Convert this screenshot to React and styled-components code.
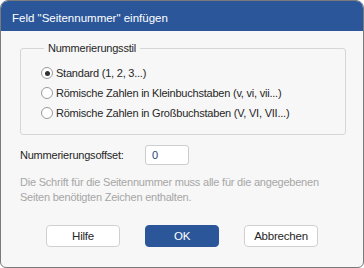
import React from 'react';
import styled, { createGlobalStyle } from 'styled-components';

const GlobalStyle = createGlobalStyle`
    html, body {
        margin: 0;
        padding: 0;
        background: #ffffff;
    }
    * {
        box-sizing: border-box;
    }
`;

const Window = styled.div`
    width: 364px;
    height: 268px;
    display: flex;
    flex-direction: column;
    border: 1px solid #7a7a7a;
    border-radius: 8px 8px 6px 6px;
    background: #f7f7f7;
    overflow: hidden;
    font-family: "Liberation Sans", Arial, sans-serif;
    color: #262626;
`;

const TitleBar = styled.div`
    height: 30px;
    flex: none;
    display: flex;
    align-items: center;
    padding: 3px 0 0 11px;
    background: #2b579a;
    color: #ffffff;
    font-size: 11.5px;
`;

const Body = styled.div`
    flex: 1;
    display: flex;
    flex-direction: column;
    padding: 10px 17px 0 19px;
    font-size: 11px;
    letter-spacing: -0.22px;
`;

const Group = styled.fieldset`
    margin: 0;
    padding: 8px 0 11px 20px;
    border: 1px solid #d6d6d6;
    border-radius: 3px;
    display: flex;
    flex-direction: column;
`;

const Legend = styled.legend`
    margin-left: 3px;
    padding: 0 4px;
    line-height: 14px;
`;

const RadioRow = styled.label`
    height: 20px;
    display: flex;
    align-items: center;
    gap: 3px;
`;

const RadioDot = styled.span`
    width: 12px;
    height: 12px;
    border-radius: 50%;
    border: 1px solid #9a9a9a;
    background: #ffffff;
    display: flex;
    align-items: center;
    justify-content: center;
    &::after {
        content: '';
        width: 5px;
        height: 5px;
        border-radius: 50%;
        background: ${p => (p.$checked ? '#333333' : 'transparent')};
    }
`;

const OffsetRow = styled.div`
    margin-top: 10px;
    height: 20px;
    display: flex;
    align-items: center;
`;

const OffsetLabel = styled.span`
    width: 125px;
`;

const OffsetInput = styled.div`
    width: 44px;
    height: 20px;
    display: flex;
    align-items: center;
    padding-left: 6px;
    border: 1px solid #cdcdcd;
    border-radius: 3px;
    background: #ffffff;
    color: #1f3f7a;
`;

const Hint = styled.p`
    margin: 10px 0 0;
    line-height: 15px;
    color: #a6a6a6;
`;

const Buttons = styled.div`
    margin-top: 20px;
    display: flex;
    justify-content: center;
    gap: 25px;
    padding-right: 2px;
`;

const Button = styled.div`
    width: 74px;
    height: 22px;
    display: flex;
    align-items: center;
    justify-content: center;
    border: 1px solid ${p => (p.$primary ? '#2b579a' : '#d0d0d0')};
    border-radius: 4px;
    background: ${p => (p.$primary ? '#2b579a' : '#ffffff')};
    color: ${p => (p.$primary ? '#ffffff' : '#262626')};
    font-size: 11.5px;
`;

const options = [
    { label: 'Standard (1, 2, 3...)', checked: true },
    { label: 'Römische Zahlen in Kleinbuchstaben (v, vi, vii...)', checked: false },
    { label: 'Römische Zahlen in Großbuchstaben (V, VI, VII...)', checked: false }
];

export default function App() {
    return (
        <>
            <GlobalStyle />
            <Window>
                <TitleBar>Feld "Seitennummer" einfügen</TitleBar>
                <Body>
                    <Group>
                        <Legend>Nummerierungsstil</Legend>
                        {options.map(item => (
                            <RadioRow key={item.label}>
                                <RadioDot $checked={item.checked} />
                                {item.label}
                            </RadioRow>
                        ))}
                    </Group>
                    <OffsetRow>
                        <OffsetLabel>Nummerierungsoffset:</OffsetLabel>
                        <OffsetInput>0</OffsetInput>
                    </OffsetRow>
                    <Hint>
                        Die Schrift für die Seitennummer muss alle für die angegebenen
                        <br />
                        Seiten benötigten Zeichen enthalten.
                    </Hint>
                    <Buttons>
                        <Button>Hilfe</Button>
                        <Button $primary>OK</Button>
                        <Button>Abbrechen</Button>
                    </Buttons>
                </Body>
            </Window>
        </>
    );
}
